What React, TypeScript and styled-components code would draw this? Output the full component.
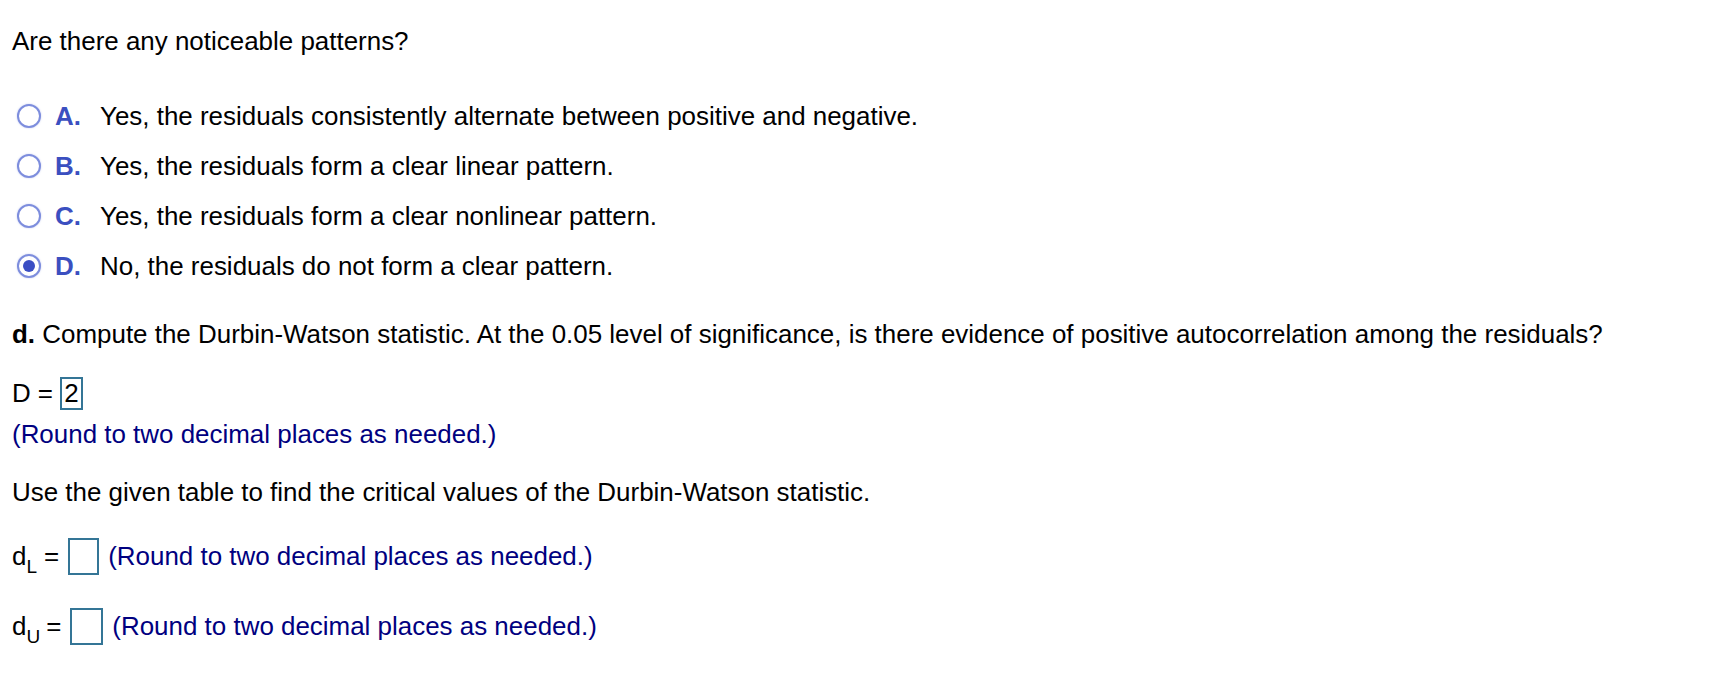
import React from "react";
import styled, { createGlobalStyle } from "styled-components";

const Global = createGlobalStyle`
  html, body { margin: 0; padding: 0; background: #fff; }
  body { font-family: "Liberation Sans", Arial, sans-serif; color: #000; }
`;

const Page = styled.div`
  padding: 26px 12px 0 12px;
  font-size: 25.95px;
  line-height: 30px;
`;

const Para = styled.div<{ $mt: number }>`
  margin-top: ${(p) => p.$mt}px;
  white-space: nowrap;
`;

const Options = styled.div`
  margin-top: 35px;
  display: flex;
  flex-direction: column;
`;

const OptionRow = styled.div`
  height: 50px;
  display: flex;
  align-items: center;
  white-space: nowrap;
`;

const Radio = styled.span<{ $checked?: boolean }>`
  box-sizing: border-box;
  width: 24px;
  height: 24px;
  margin-left: 5px;
  margin-right: 14px;
  border-radius: 50%;
  border: 2px solid #7d8ddd;
  background: #fff;
  box-shadow: 0 0 2px rgba(110, 125, 215, 0.4);
  display: flex;
  align-items: center;
  justify-content: center;
  &::after {
    content: "";
    display: ${(p) => (p.$checked ? "block" : "none")};
    width: 12px;
    height: 12px;
    border-radius: 50%;
    background: #3a4ec4;
  }
`;

const Letter = styled.span`
  width: 45px;
  font-weight: bold;
  color: #3b4fc0;
`;

const Bold = styled.b``;

const AnswerRow = styled.div<{ $mt: number; $h: number }>`
  margin-top: ${(p) => p.$mt}px;
  height: ${(p) => p.$h}px;
  display: flex;
  align-items: center;
  white-space: nowrap;
`;

const InputBox = styled.span<{ $w: number; $h: number }>`
  box-sizing: border-box;
  width: ${(p) => p.$w}px;
  height: ${(p) => p.$h}px;
  border: 2px solid #347596;
  display: inline-flex;
  align-items: center;
  justify-content: center;
  color: #000;
`;

const Hint = styled.span<{ $ml?: number }>`
  color: #000080;
  margin-left: ${(p) => p.$ml ?? 0}px;
`;

const Eq = styled.span<{ $ml: number; $mr: number }>`
  margin-left: ${(p) => p.$ml}px;
  margin-right: ${(p) => p.$mr}px;
`;

const Sub = styled.sub`
  font-size: 19px;
  vertical-align: -8px;
  line-height: 0;
`;

const options = [
  { k: "A.", t: "Yes, the residuals consistently alternate between positive and negative." },
  { k: "B.", t: "Yes, the residuals form a clear linear pattern." },
  { k: "C.", t: "Yes, the residuals form a clear nonlinear pattern." },
  { k: "D.", t: "No, the residuals do not form a clear pattern.", checked: true },
];

export default function App() {
  return (
    <>
      <Global />
      <Page>
        <Para $mt={0}>Are there any noticeable patterns?</Para>
        <Options>
          {options.map((o) => (
            <OptionRow key={o.k}>
              <Radio $checked={o.checked} />
              <Letter>{o.k}</Letter>
              <span>{o.t}</span>
            </OptionRow>
          ))}
        </Options>
        <Para $mt={28}>
          <Bold>d.</Bold> Compute the Durbin-Watson statistic. At the 0.05 level of significance, is there evidence of
          positive autocorrelation among the residuals?
        </Para>
        <AnswerRow $mt={27} $h={34}>
          <span>D</span>
          <Eq $ml={7} $mr={7}>=</Eq>
          <InputBox $w={23} $h={33}>2</InputBox>
        </AnswerRow>
        <Para $mt={9}>
          <Hint>(Round to two decimal places as needed.)</Hint>
        </Para>
        <Para $mt={28}>Use the given table to find the critical values of the Durbin-Watson statistic.</Para>
        <AnswerRow $mt={30} $h={38}>
          <span>
            d<Sub>L</Sub>
          </span>
          <Eq $ml={7} $mr={9}>=</Eq>
          <InputBox $w={31} $h={37} />
          <Hint $ml={9}>(Round to two decimal places as needed.)</Hint>
        </AnswerRow>
        <AnswerRow $mt={32} $h={38}>
          <span>
            d<Sub>U</Sub>
          </span>
          <Eq $ml={6} $mr={9}>=</Eq>
          <InputBox $w={33} $h={37} />
          <Hint $ml={9}>(Round to two decimal places as needed.)</Hint>
        </AnswerRow>
      </Page>
    </>
  );
}
